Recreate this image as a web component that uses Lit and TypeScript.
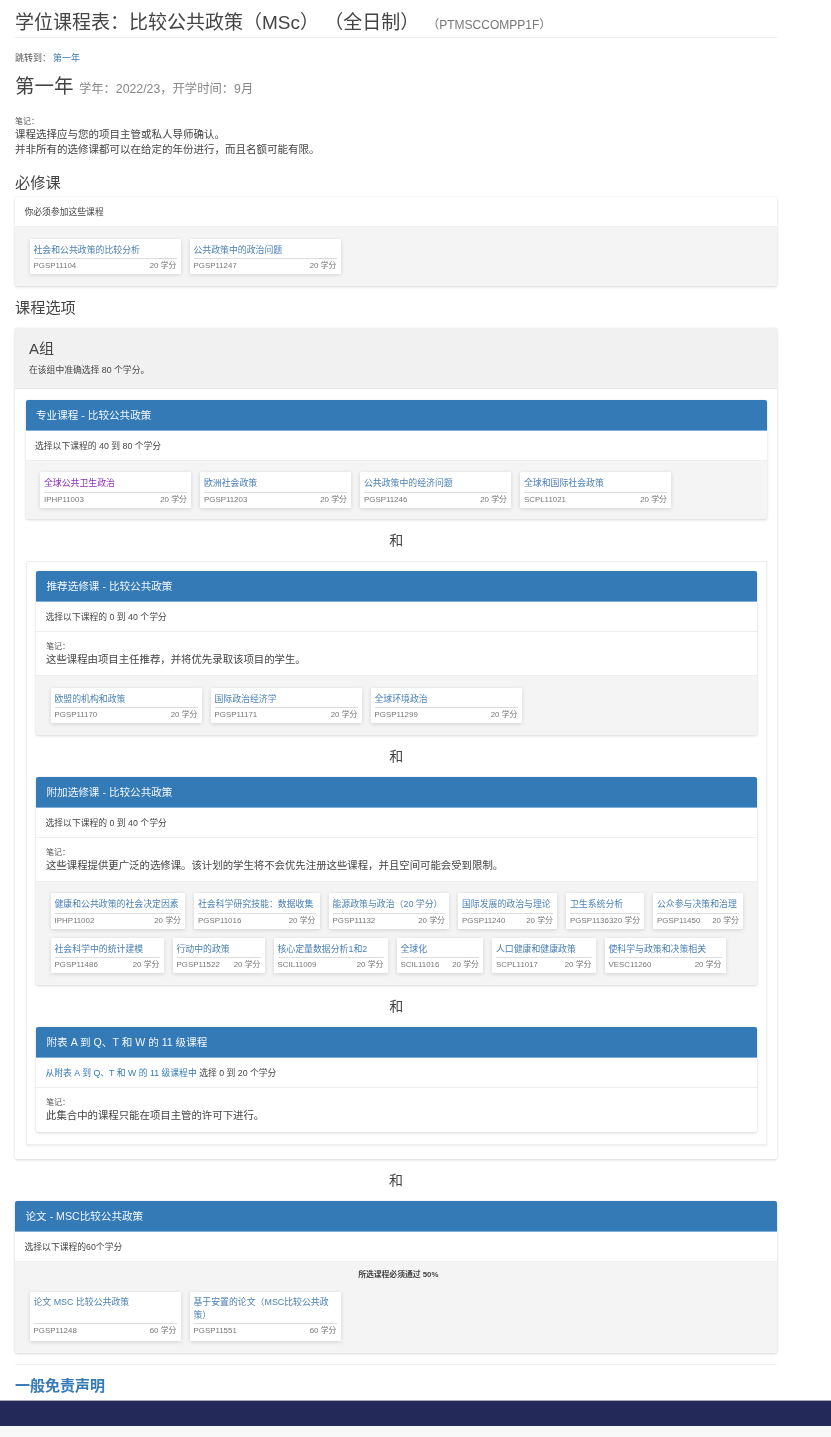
import { LitElement, html, css } from "lit";
import { customElement } from "lit/decorators.js";

const C = "\uFF1A";
const L = "\uFF08";
const R = "\uFF09";
const K = "\uFF0C";
const S = "\u00A0";

type Course = { t: string; c: string; p: string; w: number; v?: boolean };
const r = (t: string, c: string, w = 151, p = "20 学分", v = false): Course => ({ t, c, p, w, v });

@customElement("app-root")
export class AppRoot extends LitElement {
  static styles = css`
    :host { display: block; font-family: "Liberation Sans", "Noto Sans CJK SC", sans-serif; color: #444; background: #fff; font-size: 9px; filter: blur(0.35px); }
    .page { width: 762px; margin-left: 15px; }
    h1 { margin: 0; height: 38px; border-bottom: 1px solid #eee; box-sizing: border-box; font-weight: 400; font-size: 19px; line-height: 45px; color: #444; white-space: nowrap; }
    h1 small { font-size: 12px; color: #777; margin-left: 14px; }
    .jump { margin-top: 13.5px; font-size: 9px; line-height: 12px; color: #555; }
    .jump a { color: #337ab7; margin-left: 2px; }
    h2 { margin: 7.5px 0 0; height: 30px; font-weight: 400; font-size: 19.5px; line-height: 30px; color: #444; }
    h2 small { font-size: 12.3px; color: #888; }
    .nlabel { font-size: 8px; line-height: 11px; color: #555; }
    .notes { margin-top: 14.5px; font-size: 10.5px; line-height: 15px; color: #444; }
    .notes p { margin: 0; }
    h3 { margin: 0; font-weight: 400; font-size: 15.2px; line-height: 20px; color: #444; }
    .h1st { margin-top: 16.7px; padding-bottom: 4.3px; }
    .sec2 { margin: 12px 0 10.5px; }
    .panel { background: #fff; border-radius: 2px; box-shadow: 0 1px 3px rgba(0,0,0,.15), 0 0 1px rgba(0,0,0,.12); }
    .head { height: 31px; line-height: 30px; padding: 0 10.5px; background: #337ab7; border-bottom: 1px solid #7fb0dc; color: #f2f6fa; font-size: 10.6px; box-sizing: border-box; border-radius: 2px 2px 0 0; }
    .desc { height: 30px; line-height: 30.5px; padding: 0 9.5px; font-size: 8.8px; color: #444; border-bottom: 1px solid #eee; box-sizing: border-box; }
    .desc a { color: #337ab7; }
    .note { height: 44px; padding: 9px 10px 0; box-sizing: border-box; font-size: 10.4px; line-height: 15px; color: #444; border-bottom: 1px solid #eee; }
    .note.last { border-bottom: 0; }
    .grey { background: #f4f4f4; padding: 11.5px 10px 11.5px 14.5px; display: flex; flex-wrap: wrap; gap: 9px; border-radius: 0 0 2px 2px; }
    .card { background: #fff; box-shadow: 0 1px 4px rgba(0,0,0,.14); box-sizing: border-box; padding: 0 4px; display: flex; flex-direction: column; border-radius: 1px; }
    .card .t { flex: 1; color: #4a80b5; font-size: 8.9px; line-height: 13px; padding-top: 5px; border-bottom: 1px solid #ddd; }
    .card .t.v { color: #8e2fb5; }
    .card .f { display: flex; justify-content: space-between; font-size: 7.9px; height: 15px; line-height: 14.5px; color: #777; white-space: nowrap; }
    .card.tall { height: 48.7px; }
    .card.tall .t { flex: none; height: 31.5px; box-sizing: border-box; padding-top: 4px; }
    .card.tall .f { height: auto; flex: 1; }
    .and { text-align: center; font-size: 14px; line-height: 20px; color: #444; margin: 11px 0; }
    .gh { height: 61px; background: #f1f1f1; border-bottom: 1px solid #e6e6e6; padding: 10.5px 14px 0; box-sizing: border-box; }
    .gh .n { font-size: 15px; line-height: 19px; color: #444; }
    .gh .d { font-size: 8.8px; line-height: 12px; margin-top: 6px; color: #444; }
    .gb { padding: 10.5px 10px 14px 10.5px; }
    .inner { background: #fff; border: 1px solid #eee; padding: 9px 9.5px 12px; box-shadow: 0 1px 2px rgba(0,0,0,.08); }
    .center { width: 100%; text-align: center; font-size: 7.8px; font-weight: 700; color: #444; line-height: 10px; margin: -3.5px 0 3.5px; }
    .rule { border-top: 1px solid #eee; margin-top: 11.5px; }
    .bold { margin: 11px 0 4px; font-size: 15px; line-height: 20px; font-weight: 700; color: #337ab7; }
    .navy { height: 26px; background: #232a5a; border-top: 1px solid #aab; box-sizing: border-box; }
    .foot { height: 11px; background: #f8f8f8; }
  `;

  private card(c: Course, tall = false) {
    return html`<div class="card ${tall ? "tall" : ""}" style="width:${c.w}px;${tall ? "" : "height:35.5px"}">
      <div class="t ${c.v ? "v" : ""}">${c.t}</div>
      <div class="f"><span>${c.c}</span><span>${c.p}</span></div>
    </div>`;
  }

  private panel(title: string, desc: unknown, note: string, courses: Course[]) {
    return html`<div class="panel">
      ${title ? html`<div class="head">${title}</div>` : ""}
      <div class="desc">${desc}</div>
      ${note ? html`<div class="note ${courses.length ? "" : "last"}"><div class="nlabel">笔记${C}</div>${note}</div>` : ""}
      ${courses.length ? html`<div class="grey">${courses.map((c) => this.card(c))}</div>` : ""}
    </div>`;
  }

  render() {
    return html`<div class="page">
        <h1>${`学位课程表${C}比较公共政策${L}MSc${R}${S}${L}全日制${R}`}<small>${`${L}PTMSCCOMPP1F${R}`}</small></h1>
        <div class="jump">跳转到${C}<a>第一年</a></div>
        <h2>第一年 <small>${`学年${C}2022/23${K}开学时间${C}9月`}</small></h2>
        <div class="notes">
          <div class="nlabel">笔记${C}</div>
          <p>课程选择应与您的项目主管或私人导师确认。</p>
          <p>${`并非所有的选修课都可以在给定的年份进行${K}而且名额可能有限。`}</p>
        </div>
        <h3 class="h1st">必修课</h3>
        ${this.panel("", "你必须参加这些课程", "", [r("社会和公共政策的比较分析", "PGSP11104"), r("公共政策中的政治问题", "PGSP11247")])}
        <h3 class="sec2">课程选项</h3>
        <div class="panel">
          <div class="gh"><div class="n">A组</div><div class="d">在该组中准确选择 80 个学分。</div></div>
          <div class="gb">
            ${this.panel("专业课程 - 比较公共政策", "选择以下课程的 40 到 80 个学分", "", [
              r("全球公共卫生政治", "IPHP11003", 151, "20 学分", true),
              r("欧洲社会政策", "PGSP11203"),
              r("公共政策中的经济问题", "PGSP11246"),
              r("全球和国际社会政策", "SCPL11021"),
            ])}
            <div class="and">和</div>
            <div class="inner">
              ${this.panel("推荐选修课 - 比较公共政策", "选择以下课程的 0 到 40 个学分", `这些课程由项目主任推荐${K}并将优先录取该项目的学生。`, [
                r("欧盟的机构和政策", "PGSP11170"),
                r("国际政治经济学", "PGSP11171"),
                r("全球环境政治", "PGSP11299"),
              ])}
              <div class="and">和</div>
              ${this.panel("附加选修课 - 比较公共政策", "选择以下课程的 0 到 40 个学分", `这些课程提供更广泛的选修课。该计划的学生将不会优先注册这些课程${K}并且空间可能会受到限制。`, [
                r("健康和公共政策的社会决定因素", "IPHP11002", 134.5),
                r(`社会科学研究技能${C}数据收集`, "PGSP11016", 125.5),
                r(`能源政策与政治${L}20 学分${R}`, "PGSP11132", 120.5),
                r("国际发展的政治与理论", "PGSP11240", 99),
                r("卫生系统分析", "PGSP11363", 78),
                r("公众参与决策和治理", "PGSP11450", 90),
                r("社会科学中的统计建模", "PGSP11486", 113),
                r("行动中的政策", "PGSP11522", 92),
                r("核心定量数据分析1和2", "SCIL11009", 114),
                r("全球化", "SCIL11016", 86.5),
                r("人口健康和健康政策", "SCPL11017", 103.5),
                r("使科学与政策和决策相关", "VESC11260", 121),
              ])}
              <div class="and">和</div>
              ${this.panel("附表 A 到 Q、T 和 W 的 11 级课程", html`<a>从附表 A 到 Q、T 和 W 的 11 级课程中</a> 选择 0 到 20 个学分`, "此集合中的课程只能在项目主管的许可下进行。", [])}
            </div>
          </div>
        </div>
        <div class="and">和</div>
        <div class="panel">
          <div class="head">论文 - MSC比较公共政策</div>
          <div class="desc">选择以下课程的60个学分</div>
          <div class="grey">
            <div class="center">所选课程必须通过 50%</div>
            ${this.card(r("论文 MSC 比较公共政策", "PGSP11248", 151, "60 学分"), true)}
            ${this.card(r(`基于安置的论文${L}MSC比较公共政策${R}`, "PGSP11551", 151, "60 学分"), true)}
          </div>
        </div>
        <div class="rule"></div>
        <div class="bold">一般免责声明</div>
      </div>
      <div class="navy"></div>
      <div class="foot"></div>`;
  }
}
